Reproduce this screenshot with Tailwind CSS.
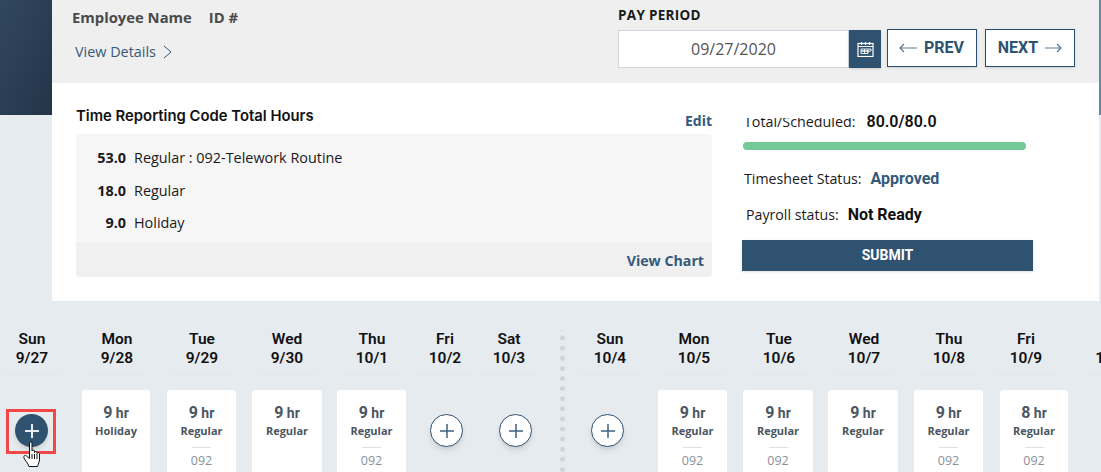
<!DOCTYPE html>
<html lang="en">
<head>
  <meta charset="UTF-8" />
  <title>Timesheet</title>
  <script src="https://cdn.jsdelivr.net/npm/@tailwindcss/browser@4"></script>
</head>
<body class="bg-[#e6ebf0] h-[472px] w-[1101px] overflow-hidden font-['Open_Sans',sans-serif] text-[#1a1a1a]">

  <!-- top area -->
  <div class="flex h-[301px]">
    <div class="w-[52px] h-[115px] shrink-0 bg-gradient-to-br from-[#31475e] to-[#243449]"></div>
    <div class="w-[1047px] shrink-0">
      <div class="h-[83px] bg-[#efefef] flex">
        <div class="w-[566px] pl-[20px] pt-[7px]">
          <div class="flex text-[14.800px] font-bold text-[#4a4a4a] leading-[20px]">
            <span>Employee Name</span><span class="ml-[17px]">ID #</span>
          </div>
          <div class="flex items-center mt-[15px] ml-[3px] text-[14.400px] text-[#34597a] leading-[20px]">
            View Details
            <svg class="ml-[7px]" width="9" height="14" viewBox="0 0 9 14" fill="none" stroke="#34597a" stroke-width="1"><path d="M1 1l7 6-7 6"/></svg>
          </div>
        </div>
        <div class="pt-[6px]">
          <div class="text-[13.500px] font-bold text-[#1a1a1a] tracking-[0.3px] leading-[18px]">PAY PERIOD</div>
          <div class="flex mt-[6px]">
            <div class="w-[231px] h-[38px] bg-white border border-[#cdd6df] text-center text-[16px] text-[#555] leading-[36px]">09/27/2020</div>
            <div class="w-[32px] h-[38px] bg-[#2f5270] flex items-center justify-center shadow-sm">
              <svg width="17" height="16" viewBox="0 0 17 16" fill="none" stroke="#fff" stroke-width="1.200"><rect x="1" y="2.500" width="15" height="13"/><path d="M1 5.500h15M4.500 1v3M8.500 1v3M12.500 1v3" /><path d="M4 8h10v2H4zM4 10h7v2.500H4zM7.500 8v4.500M11 8v4" stroke-width="0.900"/></svg>
            </div>
            <div class="w-[90px] h-[38px] ml-[6px] -mt-[1px] bg-white border border-[#2a4f6e] flex items-center justify-center shadow-sm text-[#2f5270] font-bold text-[16px] font-['Roboto',sans-serif]">
              <svg class="mr-[7px] -ml-[1px]" width="18" height="10" viewBox="0 0 18 10" fill="none" stroke="#5b7a94" stroke-width="1.200"><path d="M18 5H1M5 1L1 5l4 4"/></svg>
              PREV
            </div>
            <div class="w-[90px] h-[38px] ml-[8px] -mt-[1px] bg-white border border-[#2a4f6e] flex items-center justify-center shadow-sm text-[#2f5270] font-bold text-[16px] font-['Roboto',sans-serif]">
              NEXT
              <svg class="ml-[7px]" width="17" height="10" viewBox="0 0 17 10" fill="none" stroke="#5b7a94" stroke-width="1.200"><path d="M0 5h16M12 1l4 4-4 4"/></svg>
            </div>
          </div>
        </div>
      </div>

      <div class="h-[218px] bg-white flex overflow-hidden">
        <div class="w-[660px] pl-[24px] shrink-0">
          <div class="flex justify-between items-start h-[51px]">
            <span class="mt-[23px] text-[14.850px] font-['Inter',sans-serif] font-semibold text-[#111] leading-[20px]">Time Reporting Code Total Hours</span>
            <span class="mt-[29px] text-[14px] font-bold text-[#34597a] leading-[18px]">Edit</span>
          </div>
          <div class="h-[143px] bg-[#f6f6f6] rounded-[4px] overflow-hidden flex flex-col">
            <div class="flex-1 pt-[8px] text-[14.400px] leading-[32.500px]">
              <div class="flex"><b class="w-[50px] text-right font-bold">53.0</b><span class="ml-[8px]">Regular : 092-Telework Routine</span></div>
              <div class="flex"><b class="w-[50px] text-right font-bold">18.0</b><span class="ml-[8px]">Regular</span></div>
              <div class="flex"><b class="w-[50px] text-right font-bold">9.0</b><span class="ml-[8px]">Holiday</span></div>
            </div>
            <div class="h-[35px] bg-[#f0f0f0] text-right pr-[8px] text-[14.200px] font-bold text-[#34597a] leading-[38px]">View Chart</div>
          </div>
        </div>
        <div class="pl-[30px] pt-[30px] w-[321px] shrink-0">
          <div class="flex items-center h-[18px] ml-[2px] text-[14.300px] leading-[18px]">
            <!-- the label is cut off along its top in the original too -->
            <span class="[clip-path:inset(5px_0_0_0)]">Total/Scheduled:</span><b class="ml-[11px] font-['Roboto',sans-serif] font-semibold text-[16px] text-[#111]">80.0/80.0</b>
          </div>
          <div class="w-[283px] h-[8px] bg-[#74c997] rounded-full ml-[1px] mt-[11px]"></div>
          <div class="flex items-center ml-[2px] mt-[18px] h-[22px] text-[14.200px]">
            Timesheet Status:<b class="ml-[9px] text-[#34597a] font-['Roboto',sans-serif] font-bold text-[16px]">Approved</b>
          </div>
          <div class="flex items-center ml-[4px] mt-[14px] h-[22px] text-[14.200px]">
            Payroll status:<b class="ml-[9px] text-[#111] font-['Roboto',sans-serif] font-bold text-[16px]">Not Ready</b>
          </div>
          <div class="w-[291px] h-[31px] mt-[14px] bg-[#2f5270] text-white text-center font-['Roboto',sans-serif] font-bold text-[14px] leading-[31px] shadow-sm">SUBMIT</div>
        </div>
      </div>
    </div>
    <div class="w-[2px] h-[115px] bg-[#6587ab]"></div>
  </div>

  <!-- calendar -->
  <div class="flex mt-[29px] w-[1101px] overflow-hidden">
    <!-- week 1 -->
    <div class="w-[560px] shrink-0">
      <div class="flex text-center font-['Roboto',sans-serif] font-semibold text-[15.500px] leading-[19px] text-[#111]">
        <div class="ml-[3px] w-[58px] pb-[7px] border-b border-[#e2e7ec]">Sun<br>9/27</div>
        <div class="ml-[27px] w-[58px] pb-[7px] border-b border-[#e2e7ec]">Mon<br>9/28</div>
        <div class="ml-[27px] w-[58px] pb-[7px] border-b border-[#e2e7ec]">Tue<br>9/29</div>
        <div class="ml-[27px] w-[58px] pb-[7px] border-b border-[#e2e7ec]">Wed<br>9/30</div>
        <div class="ml-[27px] w-[58px] pb-[7px] border-b border-[#e2e7ec]">Thu<br>10/1</div>
        <div class="ml-[15px] w-[58px] pb-[7px] border-b border-[#e2e7ec]">Fri<br>10/2</div>
        <div class="ml-[6px] w-[58px] pb-[7px] border-b border-[#e2e7ec]">Sat<br>10/3</div>
      </div>
      <div class="flex items-start mt-[14px]">
        <div class="relative w-[82px] h-[82px] shrink-0 pt-[24px] pl-[15px]">
          <div class="w-[33px] h-[33px] rounded-full bg-[#2f5270] shadow-md flex items-center justify-center">
            <svg width="16" height="16" viewBox="0 0 16 16" stroke="#e8edf2" stroke-width="2"><path d="M8 1v14M1 8h14"/></svg>
          </div>
          <div class="absolute left-[6px] top-[19px] w-[50px] h-[45px] border-[3px] border-[#f44848]"></div>
          <svg class="absolute left-[23px] top-[51px]" width="19" height="26" viewBox="0 0 19 26" fill="#fff" stroke="#111" stroke-width="1"><path d="M6.500 2C6.500.6 9 .6 9 2v8c0-1.200 2.500-1.200 2.500 0v1.500c0-1.200 2.500-1.200 2.500 0v1c0-1.200 2.500-1.200 2.500 0V18c0 3-1 4-2 7.500H6c-.5-3-5-7-5.200-9-.3-2 1.700-2.500 2.700-1.500l3 2.500z"/><path d="M9 13v5M11.500 13v5M14 13v5" fill="none"/></svg>
        </div>
        <div class="w-[68px] h-[90px] shrink-0 rounded-[3px] bg-white text-center pt-[13px] text-[#4b5661]">
          <div class="font-['Roboto',sans-serif] font-bold text-[14px] leading-[20px]"><span class="text-[16px]">9</span> hr</div>
          <div class="text-[11px] font-bold leading-[16px]">Holiday</div>
        </div>
        <div class="ml-[17px] w-[69px] h-[90px] shrink-0 rounded-[3px] bg-white text-center pt-[13px] text-[#4b5661]">
          <div class="font-['Roboto',sans-serif] font-bold text-[14px] leading-[20px]"><span class="text-[16px]">9</span> hr</div>
          <div class="text-[11px] font-bold leading-[16px]">Regular</div>
          <div class="w-[19px] h-px bg-[#e0e0e0] mx-auto mt-[8px]"></div>
          <div class="text-[12.500px] text-[#87919b] leading-[16px] mt-[5px]">092</div>
        </div>
        <div class="ml-[16px] w-[70px] h-[90px] shrink-0 rounded-[3px] bg-white text-center pt-[13px] text-[#4b5661]">
          <div class="font-['Roboto',sans-serif] font-bold text-[14px] leading-[20px]"><span class="text-[16px]">9</span> hr</div>
          <div class="text-[11px] font-bold leading-[16px]">Regular</div>
        </div>
        <div class="ml-[15px] w-[69px] h-[90px] shrink-0 rounded-[3px] bg-white text-center pt-[13px] text-[#4b5661]">
          <div class="font-['Roboto',sans-serif] font-bold text-[14px] leading-[20px]"><span class="text-[16px]">9</span> hr</div>
          <div class="text-[11px] font-bold leading-[16px]">Regular</div>
          <div class="w-[19px] h-px bg-[#e0e0e0] mx-auto mt-[8px]"></div>
          <div class="text-[12.500px] text-[#87919b] leading-[16px] mt-[5px]">092</div>
        </div>
        <div class="ml-[24px] mt-[24px] w-[33px] h-[33px] shrink-0 rounded-full bg-white border border-[#2f5270] shadow-md flex items-center justify-center">
          <svg width="16" height="16" viewBox="0 0 16 16" stroke="#3f6282" stroke-width="1.500"><path d="M8 1v14M1 8h14"/></svg>
        </div>
        <div class="ml-[36px] mt-[24px] w-[33px] h-[33px] shrink-0 rounded-full bg-white border border-[#2f5270] shadow-md flex items-center justify-center">
          <svg width="16" height="16" viewBox="0 0 16 16" stroke="#3f6282" stroke-width="1.500"><path d="M8 1v14M1 8h14"/></svg>
        </div>
      </div>
    </div>

    <!-- dotted week separator -->
    <svg class="shrink-0" width="5" height="142" viewBox="0 0 5 142" fill="none" stroke="#cdd5dd" stroke-width="5" stroke-linecap="round" stroke-dasharray="0 10.100"><path d="M2.500 -2v144"/></svg>

    <!-- week 2 -->
    <div class="shrink-0">
      <div class="flex text-center font-['Roboto',sans-serif] font-semibold text-[15.500px] leading-[19px] text-[#111]">
        <div class="ml-[16px] w-[58px] pb-[7px] border-b border-[#e2e7ec]">Sun<br>10/4</div>
        <div class="ml-[26px] w-[58px] pb-[7px] border-b border-[#e2e7ec]">Mon<br>10/5</div>
        <div class="ml-[27px] w-[58px] pb-[7px] border-b border-[#e2e7ec]">Tue<br>10/6</div>
        <div class="ml-[27px] w-[58px] pb-[7px] border-b border-[#e2e7ec]">Wed<br>10/7</div>
        <div class="ml-[27px] w-[58px] pb-[7px] border-b border-[#e2e7ec]">Thu<br>10/8</div>
        <div class="ml-[19px] w-[58px] pb-[7px] border-b border-[#e2e7ec]">Fri<br>10/9</div>
        <div class="ml-[32px] w-[58px] pb-[7px] border-b border-[#e2e7ec]">Sat<br>10/10</div>
      </div>
      <div class="flex items-start mt-[14px]">
        <div class="ml-[26px] mt-[24px] w-[33px] h-[33px] shrink-0 rounded-full bg-white border border-[#2f5270] shadow-md flex items-center justify-center">
          <svg width="16" height="16" viewBox="0 0 16 16" stroke="#3f6282" stroke-width="1.500"><path d="M8 1v14M1 8h14"/></svg>
        </div>
        <div class="ml-[34px] w-[69px] h-[90px] shrink-0 rounded-[3px] bg-white text-center pt-[13px] text-[#4b5661]">
          <div class="font-['Roboto',sans-serif] font-bold text-[14px] leading-[20px]"><span class="text-[16px]">9</span> hr</div>
          <div class="text-[11px] font-bold leading-[16px]">Regular</div>
          <div class="w-[19px] h-px bg-[#e0e0e0] mx-auto mt-[8px]"></div>
          <div class="text-[12.500px] text-[#87919b] leading-[16px] mt-[5px]">092</div>
        </div>
        <div class="ml-[16px] w-[70px] h-[90px] shrink-0 rounded-[3px] bg-white text-center pt-[13px] text-[#4b5661]">
          <div class="font-['Roboto',sans-serif] font-bold text-[14px] leading-[20px]"><span class="text-[16px]">9</span> hr</div>
          <div class="text-[11px] font-bold leading-[16px]">Regular</div>
          <div class="w-[19px] h-px bg-[#e0e0e0] mx-auto mt-[8px]"></div>
          <div class="text-[12.500px] text-[#87919b] leading-[16px] mt-[5px]">092</div>
        </div>
        <div class="ml-[15px] w-[70px] h-[90px] shrink-0 rounded-[3px] bg-white text-center pt-[13px] text-[#4b5661]">
          <div class="font-['Roboto',sans-serif] font-bold text-[14px] leading-[20px]"><span class="text-[16px]">9</span> hr</div>
          <div class="text-[11px] font-bold leading-[16px]">Regular</div>
        </div>
        <div class="ml-[16px] w-[69px] h-[90px] shrink-0 rounded-[3px] bg-white text-center pt-[13px] text-[#4b5661]">
          <div class="font-['Roboto',sans-serif] font-bold text-[14px] leading-[20px]"><span class="text-[16px]">9</span> hr</div>
          <div class="text-[11px] font-bold leading-[16px]">Regular</div>
          <div class="w-[19px] h-px bg-[#e0e0e0] mx-auto mt-[8px]"></div>
          <div class="text-[12.500px] text-[#87919b] leading-[16px] mt-[5px]">092</div>
        </div>
        <div class="ml-[17px] w-[68px] h-[90px] shrink-0 rounded-[3px] bg-white text-center pt-[13px] text-[#4b5661]">
          <div class="font-['Roboto',sans-serif] font-bold text-[14px] leading-[20px]"><span class="text-[16px]">8</span> hr</div>
          <div class="text-[11px] font-bold leading-[16px]">Regular</div>
          <div class="w-[19px] h-px bg-[#e0e0e0] mx-auto mt-[8px]"></div>
          <div class="text-[12.500px] text-[#87919b] leading-[16px] mt-[5px]">092</div>
        </div>
      </div>
    </div>
  </div>
</body>
</html>
